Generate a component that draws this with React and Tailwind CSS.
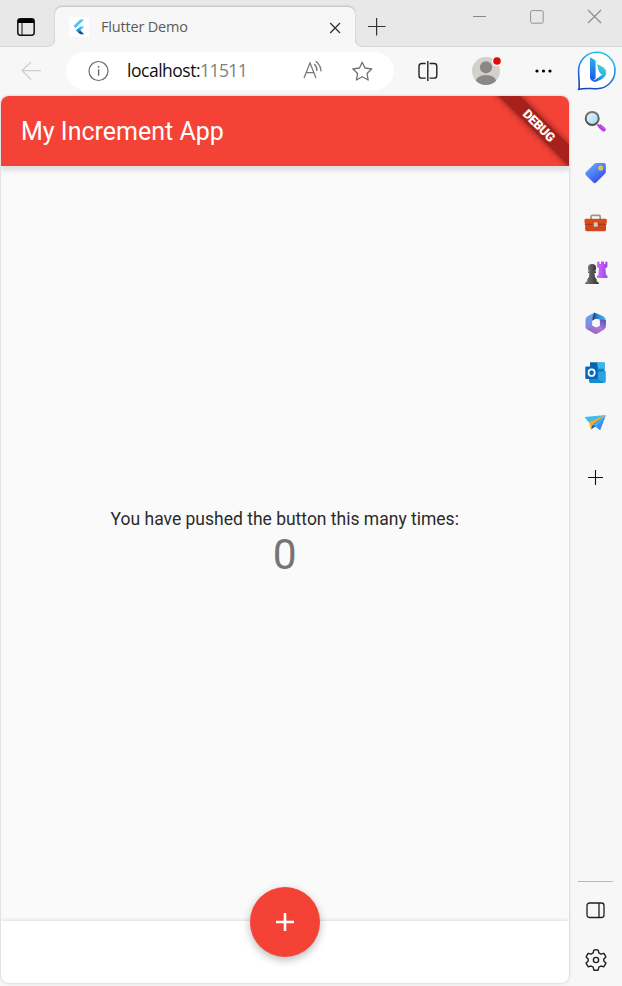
import React from 'react';

function TabStrip() {
  return (
    <header className="flex h-[47px] shrink-0 bg-[#e8e8e8] shadow-[inset_0_-1px_0_#d5d5d5]">
      <div className="flex w-[55px] shrink-0 pl-[17px] pt-[18px]">
        <svg width="18" height="19" viewBox="0 0 18 19" fill="none">
          <rect x="0.8" y="0.8" width="16.4" height="16.4" rx="2.6" stroke="#111" strokeWidth="1.5" />
          <path d="M1 5V3Q1 1 3 1H15Q17 1 17 3V5Z" fill="#000" />
          <path d="M5 5V17" stroke="#222" strokeWidth="1.1" />
        </svg>
      </div>
      <div className="relative mt-[7px] flex h-10 w-[300px] shrink-0 rounded-t-[7px] bg-[#f7f7f7] shadow-[0_-1px_2px_#bbb]">
        <svg className="absolute -left-2 bottom-0" width="8" height="8">
          <path d="M8 -1V8H0V7Q8 7 8 -1Z" fill="#f7f7f7" />
          <path d="M0 7.3Q7.6 7.3 7.6 0" fill="none" stroke="#d0d0d0" />
        </svg>
        <svg className="absolute -right-2 bottom-0" width="8" height="8">
          <path d="M0 -1V8H8V7Q0 7 0 -1Z" fill="#f7f7f7" />
          <path d="M8 7.3Q.4 7.3 .4 0" fill="none" stroke="#d0d0d0" />
        </svg>
        <svg className="ml-[14px] mt-[10px]" width="20" height="20" viewBox="0 0 20 20">
          <rect width="20" height="20" fill="#fff" />
          <path d="M11.2 2.5H15.2L6.6 11.1L4.5 9.1Z" fill="#4fc3f7" />
          <path d="M11.3 9.5H15.2L9.3 15.4L7.3 13.4Z" fill="#42bdf7" />
          <path d="M9.3 11.4L15.2 17.2H11.2L7.3 13.4Z" fill="#124c96" />
          <path d="M9.3 11.4L11.3 13.4L9.3 15.4L7.3 13.4Z" fill="#2196e8" />
        </svg>
        <span className="ml-3 mt-[9px] w-[228px] whitespace-nowrap font-['Open_Sans',sans-serif] text-[14.5px] leading-[22px] tracking-[-0.18px] text-[#5a5a5a]">Flutter Demo</span>
        <svg className="mt-[15px] shrink-0" width="12" height="12" viewBox="0 0 12 12"><path d="M1.2 1L11 11M11 1L1.2 11" stroke="#333" strokeWidth="1.3" /></svg>
      </div>
      <svg className="ml-[13px] mt-[18px] shrink-0" width="18" height="18"><path d="M0 8.5H17.5M8.6 0V17.5" stroke="#333" strokeWidth="1.2" /></svg>
      <svg className="ml-[87px] mt-[16px] shrink-0" width="13" height="1"><path d="M0 .5H13" stroke="#888" /></svg>
      <svg className="ml-[44px] mt-[10px] shrink-0" width="14" height="14"><rect x=".6" y=".6" width="12.6" height="12.6" rx="1.6" fill="none" stroke="#929292" /></svg>
      <svg className="ml-[43px] mt-[9px] shrink-0" width="15" height="15"><path d="M1 1L14 14M14 1L1 14" stroke="#8a8a8a" strokeWidth="1.1" /></svg>
    </header>
  );
}

function BingIcon() {
  return (
    <svg width="40" height="41" viewBox="0 0 40 41" className="shrink-0">
      <defs>
        <linearGradient id="bubble" x1=".7" y1="0" x2=".3" y2="1"><stop stopColor="#20c5ee" /><stop offset=".5" stopColor="#2483ee" /><stop offset="1" stopColor="#1845b8" /></linearGradient>
        <linearGradient id="stem" x1="0" y1="0" x2="0" y2="1"><stop stopColor="#2eb0fa" /><stop offset="1" stopColor="#1758df" /></linearGradient>
        <linearGradient id="bowl" x1="0" y1="1" x2=".8" y2="0"><stop stopColor="#184de0" /><stop offset=".5" stopColor="#209fee" /><stop offset="1" stopColor="#4be0d1" /></linearGradient>
      </defs>
      <path d="M1.8 38.3C3 35 1.6 29 1.6 19.6A18.2 18.2 0 1 1 20 37.7C13.4 37.8 9 36.6 1.8 38.3Z" fill="#fff" stroke="url(#bubble)" strokeWidth="1.6" />
      <path d="M13 7.2C13 6.4 13.7 6.3 14.5 6.9L17.5 8.7C18.3 9.2 18.6 9.7 18.6 10.6V27.2L15.9 29.6Q13 28.9 13 26.2Z" fill="url(#stem)" />
      <path d="M20.3 14.4C19.9 13.4 20.8 13.2 21.7 13.7L26.4 16.2Q29.3 18.3 29.3 22Q28.6 26.1 24 28.5L19.8 30.6Q15.8 32 13.6 28.2Q16 30.3 18.8 28.3L25.3 23.7Q22.5 22.4 21.9 20Z" fill="url(#bowl)" />
    </svg>
  );
}

function Toolbar() {
  return (
    <div className="flex h-[49px] shrink-0 bg-[#f7f7f7]">
      <svg className="ml-[21px] mt-[14px] shrink-0" width="20" height="20"><path d="M20 9.7H1M10 1L1 9.7L10 18.5" fill="none" stroke="#cdcdcd" strokeWidth="1.2" /></svg>
      <div className="ml-[25px] mt-[5px] flex h-[38px] w-[328px] shrink-0 rounded-full bg-white">
        <svg className="ml-[22px] mt-[8px] shrink-0" width="22" height="22" viewBox="0 0 22 22"><circle cx="10.5" cy="11" r="9.5" fill="none" stroke="#6b6b6b" strokeWidth="1.2" /><path d="M10.6 9.4V15.6" stroke="#666" strokeWidth="1.4" /><circle cx="10.6" cy="6.8" r=".9" fill="#666" /></svg>
        <span className="ml-[17px] mt-[6px] w-[176px] whitespace-nowrap font-['Open_Sans',sans-serif] text-[17.5px] leading-[25px] tracking-[-0.48px] text-[#111]">localhost:<span className="tracking-[-0.6px] text-[#7e7e7e]">11511</span></span>
        <svg className="mt-[8px] shrink-0" width="21" height="21" viewBox="0 0 21 21" fill="none" stroke="#777" strokeWidth="1.25"><path d="M1 18L7 3L13 18M3.2 12.7H10.8M11.3 4Q14.2 6.8 13.9 11M12.8 1.2Q18.4 5.8 17.8 11.4" /></svg>
        <svg className="ml-[28px] mt-[9px] shrink-0" width="21" height="21" viewBox="0 0 21 21"><path d="M10.2 1.3L13 7L19.7 8L15 12.5L16.2 19L10.2 15.8L4.4 19L5.6 12.5L.9 8L7.5 7Z" fill="none" stroke="#707070" strokeWidth="1.3" strokeLinejoin="round" /></svg>
      </div>
      <svg className="ml-[24px] mt-[14px] shrink-0" width="20" height="20" fill="none" stroke="#222" strokeWidth="1.4"><path d="M7.7 2.5H3.7Q1 2.5 1 5.2V14.4Q1 17.1 3.7 17.1H7.7M11.6 2.5H16.1Q18.8 2.5 18.8 5.2V14.4Q18.8 17.1 16.1 17.1H11.6M9.8 0V20" /></svg>
      <svg className="ml-[34px] mt-[8px] shrink-0" width="32" height="32" viewBox="0 0 32 32">
        <defs><clipPath id="avatar"><circle cx="14" cy="16" r="14" /></clipPath></defs>
        <circle cx="14" cy="16" r="14" fill="#d3d1ce" />
        <g fill="#8b8784" clipPath="url(#avatar)"><circle cx="14" cy="12.3" r="6.1" /><ellipse cx="14" cy="27" rx="10.5" ry="7" /></g>
        <circle cx="25" cy="6" r="5.2" fill="#f7f7f7" /><circle cx="25" cy="6" r="3.8" fill="#e00b0b" />
      </svg>
      <svg className="ml-[31px] mt-[22px] shrink-0" width="17" height="4"><circle cx="2" cy="2" r="1.6" /><circle cx="8.5" cy="2" r="1.6" /><circle cx="15" cy="2" r="1.6" /></svg>
      <div className="ml-[24px] mt-[4px] h-[41px] pl-[0.5px]"><BingIcon /></div>
    </div>
  );
}

function FlutterPage() {
  return (
    <main className="relative ml-px flex h-[887px] w-[567.5px] shrink-0 flex-col overflow-hidden rounded-[8px] bg-[#fafafa] font-[Roboto,sans-serif] shadow-[0_0_3px_#bbb]">
      <div className="relative z-10 flex h-[70px] shrink-0 items-center overflow-hidden bg-[#f44336] pl-5 pt-0.5">
        <h1 className="whitespace-nowrap text-[25px] leading-[30px] text-white">My Increment App</h1>
        <div className="absolute -right-[45.5px] top-[22px] flex h-[15px] w-[150px] rotate-45 items-center justify-center bg-[#a8201c] text-[12.75px] font-black text-white shadow-[0_0_7px_rgba(0,0,0,0.5)]"><span className="tracking-[-0.3px]">DEBUG</span></div>
      </div>
      <div className="relative h-0 shrink-0 shadow-[0_1px_6px_1px_rgba(0,0,0,0.42)]" />
      <section className="flex h-[755px] shrink-0 flex-col items-center pt-[343px]">
        <p className="whitespace-nowrap text-[17.5px] leading-[21px] text-[#2b2b2b]">You have pushed the button this many times:</p>
        <p className="text-[42.5px] leading-[50px] text-[#757575]">0</p>
      </section>
      <footer className="h-[62px] shrink-0 bg-white shadow-[0_0_4px_rgba(0,0,0,0.18)]" />
      <button className="absolute left-[249px] top-[790.5px] z-20 flex size-[70px] items-center justify-center rounded-full bg-[#f44336] shadow-[0_3px_9px_rgba(0,0,0,0.28)]" aria-label="Increment">
        <svg width="18" height="18"><path d="M0 9H18M9 0V18" stroke="#fff" strokeWidth="2.6" /></svg>
      </button>
    </main>
  );
}

function SearchIcon() {
  return (
    <svg width="24" height="24" viewBox="0 0 24 24">
      <defs>
        <linearGradient id="glass" x1="0" y1="0" x2="1" y2="1"><stop stopColor="#eefaff" /><stop offset="1" stopColor="#9cd5f3" /></linearGradient>
        <linearGradient id="ring" x1="0" y1="0" x2="0" y2="1"><stop stopColor="#777" /><stop offset="1" stopColor="#4c4c4c" /></linearGradient>
      </defs>
      <path d="M13.5 14.5L17 18" stroke="#777" strokeWidth="2" />
      <circle cx="8.2" cy="8.4" r="6.5" fill="url(#glass)" stroke="url(#ring)" strokeWidth="2" />
      <path d="M16.3 16.5L19.7 19.3" stroke="#b93be8" strokeWidth="4.2" strokeLinecap="round" />
      <path d="M17.5 16L20.7 18.8" stroke="#d85cf5" strokeWidth="1.3" />
    </svg>
  );
}

function TagIcon() {
  return (
    <svg width="24" height="24" viewBox="0 0 24 24">
      <defs><linearGradient id="tag" x1=".1" y1=".1" x2=".8" y2="1"><stop stopColor="#63aefb" /><stop offset=".5" stopColor="#4c78f5" /><stop offset="1" stopColor="#3440ef" /></linearGradient></defs>
      <path d="M12 2H20Q21.8 2 21.8 4V11Q21.8 12 21 12.8L12.2 21.5Q10.7 22.8 9.3 21.5L1.8 14Q.8 12.6 1.8 11.3L10.4 2.7Q11 2 12 2Z" fill="url(#tag)" />
      <circle cx="16.7" cy="7" r="1.8" fill="#9db6e8" stroke="#f6c32a" strokeWidth="1.6" />
    </svg>
  );
}

function ToolboxIcon() {
  return (
    <svg width="24" height="24" viewBox="0 0 24 24">
      <path d="M7 8V5.5Q7 4.3 8.2 4.3H15Q16.2 4.3 16.2 5.5V8" fill="none" stroke="#91969b" strokeWidth="1.7" />
      <path d="M1.2 13H22V18.4Q22 20.3 20 20.3H3.2Q1.2 20.3 1.2 18.4Z" fill="#cf471a" />
      <path d="M1.8 7.8H21.5Q22.8 7.8 22.8 9V11.3Q22.8 13.1 20.8 13.1H2.5Q.5 13.1 .5 11.3V9Q.5 7.8 1.8 7.8Z" fill="#d94b19" />
      <path d="M.7 13.2H22.5" stroke="#a53217" />
      <rect x="9.6" y="11.2" width="4.2" height="4.6" rx="1.5" fill="#c8cdd0" />
    </svg>
  );
}

function GamesIcon() {
  return (
    <svg width="24" height="24" viewBox="0 0 24 24">
      <defs>
        <linearGradient id="pawn"><stop stopColor="#777" /><stop offset="1" stopColor="#333" /></linearGradient>
        <linearGradient id="rook"><stop stopColor="#d26cff" /><stop offset="1" stopColor="#9c42ed" /></linearGradient>
      </defs>
      <path d="M13 .8H15.5V3H17V.5H20V3H21.2V.8H23.4V6L21.4 7.3L22 14.2H23.4V17H13V14.5H14.2L15 7.3L13 6Z" fill="url(#rook)" />
      <circle cx="8" cy="7" r="4.1" fill="url(#pawn)" />
      <path d="M4 10.3H12V12H10.5Q10.3 16 12.7 18.5V20.5Q15 20.5 15 23H1Q1 20.5 3.2 20.5V18.5Q5.7 16 5.4 12H4Z" fill="url(#pawn)" />
    </svg>
  );
}

function OfficeIcon() {
  return (
    <svg width="24" height="24" viewBox="0 0 24 24">
      <defs>
        <linearGradient id="m1" x1="0" x2="1"><stop stopColor="#28335d" /><stop offset=".4" stopColor="#2e80d0" /><stop offset="1" stopColor="#4cb6ed" /></linearGradient>
        <linearGradient id="m2" x1="0" y1="1" x2="1" y2="0"><stop stopColor="#8b60bf" /><stop offset=".55" stopColor="#ad79ce" /><stop offset="1" stopColor="#4058b5" /></linearGradient>
        <linearGradient id="m3" x1="0" y1="0" x2="0" y2="1"><stop stopColor="#6ba7ea" /><stop offset="1" stopColor="#8780e0" /></linearGradient>
      </defs>
      <path d="M10.3 1.5L19.2 5.2Q21.8 6.6 21.8 9.5V15.3L15.8 12V8.5Q12 7 8 10V6Q8 3 10.3 1.5Z" fill="url(#m1)" />
      <path d="M21.8 9V15.2Q21.8 17.5 19.8 18.8L13.5 22.4Q11.6 23.5 9.7 22.3L3 18.2Q1.6 17.3 1.5 15.2L8.5 14.4Q11.8 17.2 15.8 14.7V8.4Z" fill="url(#m2)" />
      <path d="M10.3 1.5L3.6 5.2Q1.5 6.4 1.5 9V15.2Q1.6 17.4 3.2 18.4L8.5 15.2V8.8Q8.3 4.5 10.3 1.5Z" fill="url(#m3)" />
      <path d="M12 7.8L15.8 9.9V14.3L12 16.5L8.2 14.3V9.9Z" fill="#f8f8ff" />
    </svg>
  );
}

function OutlookIcon() {
  return (
    <svg width="24" height="24" viewBox="0 0 24 24">
      <path d="M6 1.5H20.6V14H6Z" fill="#147dc6" />
      <path d="M13.2 1.5H20.6V7.8H13.2Z" fill="#35b8ee" />
      <path d="M6 1.5H13.2V7.8H6Z" fill="#0764aa" />
      <path d="M5.2 12L21.8 10V20.3Q21.8 22 20 22H7Q5.2 22 5.2 20.3Z" fill="#2ba2e3" />
      <path d="M5.2 12L20 22H7Q5.2 22 5.2 20Z" fill="#168ad3" />
      <rect x="1.3" y="5.5" width="12.6" height="12.5" rx="1" fill="#0868b7" />
      <ellipse cx="7.6" cy="11.7" rx="3.1" ry="3.3" fill="none" stroke="#fff" strokeWidth="1.7" />
    </svg>
  );
}

function PlaneIcon() {
  return (
    <svg width="24" height="24" viewBox="0 0 24 24">
      <defs><linearGradient id="plane" x1="0" y1="0" x2="1" y2="1"><stop stopColor="#34c8f5" /><stop offset="1" stopColor="#356bf0" /></linearGradient></defs>
      <path d="M.5 6L22 4L5 11.7Z" fill="#3fbce9" />
      <path d="M22 4L10.7 15.2L16.2 19.2Z" fill="url(#plane)" />
      <path d="M22 4L8.5 11.5L10.7 15.2Z" fill="#3e9ee8" />
      <path d="M22 4L5 11.3L7 18.5L8.8 13.2Z" fill="#f7a820" />
      <path d="M7 18.6L8.8 13.2L11.5 15.2Z" fill="#225493" />
    </svg>
  );
}

function Sidebar() {
  return (
    <aside className="flex w-[53.5px] shrink-0 flex-col items-center bg-[#f7f7f7] pl-px pt-[14px]">
      <div className="flex flex-col [&>svg]:shrink-0">
        <SearchIcon />
        <div className="mt-[27px] flex flex-col gap-[26px]"><TagIcon /><ToolboxIcon /><GamesIcon /><OfficeIcon /><OutlookIcon /><PlaneIcon /></div>
      </div>
      <svg className="mt-[35px] shrink-0" width="15" height="15"><path d="M0 7.5H15M7.5 0V15" stroke="#111" strokeWidth="1.1" /></svg>
      <div className="mt-[396px] h-px w-[35px] shrink-0 bg-[#b9b9b9]" />
      <svg className="mt-[20px] shrink-0" width="19" height="17" viewBox="0 0 19 17" fill="none" stroke="#202020" strokeWidth="1.3"><rect x="1" y="1" width="17" height="14.5" rx="2.5" /><path d="M13 1V15.5" /></svg>
      <svg className="mt-[29px] shrink-0" width="24" height="24" viewBox="0 0 24 24" fill="none" stroke="#202020" strokeWidth="1.4" strokeLinejoin="round">
        <path d="M9.8 2.1Q12 1.5 14.2 2.1L14.8 4.9L17 6.1L19.7 5.3Q21.2 7 21.9 9.1L19.8 11.1V13.1L21.9 15Q21.2 17.1 19.7 18.8L17 18L14.8 19.2L14.2 22Q12 22.5 9.8 22L9.2 19.2L7 18L4.3 18.8Q2.8 17.1 2.1 15L4.2 13.1V11.1L2.1 9.1Q2.8 7 4.3 5.3L7 6.1L9.2 4.9Z" /><circle cx="12" cy="12" r="2.6" />
      </svg>
    </aside>
  );
}

export default function App() {
  return (
    <div className="flex h-[986px] w-[622px] flex-col overflow-hidden bg-[#f7f7f7]">
      <TabStrip />
      <Toolbar />
      <div className="flex h-[890px] shrink-0"><FlutterPage /><Sidebar /></div>
    </div>
  );
}
